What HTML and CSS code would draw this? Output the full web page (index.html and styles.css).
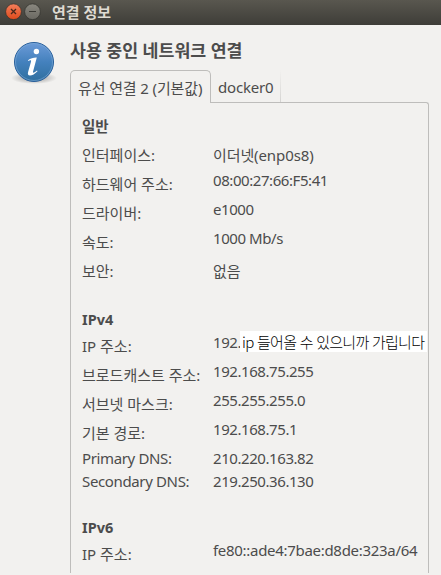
FILE: index.html
```html
<!DOCTYPE html>
<html lang="ko">
<head>
<meta charset="utf-8">
<title>연결 정보</title>
<link rel="stylesheet" href="styles.css">
</head>
<body>
<header class="titlebar">
  <svg class="controls" width="36" height="18" viewBox="0 0 36 18">
    <defs>
      <linearGradient id="close" x1="0" y1="0" x2="0" y2="1"><stop offset="0" stop-color="#f37f5c"/><stop offset="1" stop-color="#df4a1b"/></linearGradient>
      <linearGradient id="min" x1="0" y1="0" x2="0" y2="1"><stop offset="0" stop-color="#8a8880"/><stop offset="1" stop-color="#6a6861"/></linearGradient>
    </defs>
    <circle cx="8.5" cy="8.7" r="7.9" fill="url(#close)" stroke="#34332e" stroke-width=".8"/>
    <path d="M6 6l5 5M11 6l-5 5" stroke="#49281b" stroke-width="1.3"/>
    <circle cx="27.5" cy="8.7" r="7.9" fill="url(#min)" stroke="#34332e" stroke-width=".8"/>
    <path d="M24 8.5h7" stroke="#3a3934" stroke-width="1"/>
  </svg>
  <h1>연결 정보</h1>
</header>
<main>
  <svg class="info" width="46" height="46" viewBox="0 0 46 46">
    <defs>
      <linearGradient id="blue" x1="0" y1="0" x2="0" y2="1"><stop offset="0" stop-color="#6c9bd8"/><stop offset=".5" stop-color="#4481bd"/><stop offset="1" stop-color="#2f6f9f"/></linearGradient>
      <radialGradient id="shade"><stop offset="0" stop-color="#000" stop-opacity=".4"/><stop offset="1" stop-color="#000" stop-opacity="0"/></radialGradient>
    </defs>
    <ellipse cx="23" cy="37" rx="23" ry="6" fill="url(#shade)"/>
    <circle cx="23" cy="21" r="19.5" fill="url(#blue)" stroke="#285f9b"/>
    <circle cx="23" cy="21" r="18.5" fill="none" stroke="#83afd8" stroke-opacity=".55"/>
    <circle cx="25.4" cy="10.5" r="2.7" fill="#fff"/>
    <path d="M17 19.2C19.5 17.5 23 16.4 25.8 16.6L22 30.8C21.7 32.2 22.8 32 26 29.5L26.5 30.3C23.8 33 21.3 34.6 19 34.6C17 34.6 16.5 33.1 17.1 31L20 20.7C20.4 19 19.4 18.8 17.3 20.1Z" fill="#fff"/>
  </svg>
  <section class="content">
    <h2>사용 중인 네트워크 연결</h2>
    <nav class="tabs"><div class="tab active">유선 연결 2 (기본값)</div><div class="tab docker">docker0</div><div class="tabline"></div></nav>
    <div class="panel">
      <h3 class="general">일반</h3>
      <dl>
        <dt>인터페이스:</dt><dd class="ko">이더넷(enp0s8)</dd>
        <dt>하드웨어 주소:</dt><dd>08:00:27:66:F5:41</dd>
        <dt>드라이버:</dt><dd>e1000</dd>
        <dt>속도:</dt><dd>1000 Mb/s</dd>
        <dt>보안:</dt><dd class="ko">없음</dd>
      </dl>
      <h3 class="ipv4">IPv4</h3>
      <dl>
        <dt>IP 주소:</dt><dd class="masked">192.<span class="mask">ip 들어올 수 있으니까 가립니다</span></dd>
        <dt>브로드캐스트 주소:</dt><dd>192.168.75.255</dd>
        <dt>서브넷 마스크:</dt><dd>255.255.255.0</dd>
        <dt>기본 경로:</dt><dd>192.168.75.1</dd>
        <dt class="latin">Primary DNS:</dt><dd>210.220.163.82</dd>
        <dt class="latin">Secondary DNS:</dt><dd>219.250.36.130</dd>
      </dl>
      <h3 class="ipv6">IPv6</h3>
      <dl>
        <dt>IP 주소:</dt><dd class="v6">fe80::ade4:7bae:d8de:323a/64</dd>
      </dl>
    </div>
  </section>
</main>
</body>
</html>
```
FILE: styles.css
```css
* { box-sizing: border-box; }
body { margin: 0; width: 441px; height: 575px; overflow: hidden; background: #f2f1ef; color: #4c4c4c; font: 15px/17px "Noto Sans", "Noto Sans CJK KR", sans-serif; white-space: nowrap; }
h1, h2, h3, dl, dd { margin: 0; }
.titlebar { display: flex; height: 25px; padding: 3px 0 0 5px; background: linear-gradient(#59574f, #3e3d38); color: #dfdbd2; }
.controls { flex: none; }
h1 { margin-left: 11px; font-size: 15px; line-height: 18px; }
main { display: flex; height: 550px; padding-left: 11px; }
.info { flex: none; margin-top: 16px; }
.content { width: 359px; margin-left: 13px; }
h2 { height: 45px; padding: 16px 0 0; font-size: 17.3px; line-height: 20px; }
.tabs { display: flex; height: 33px; align-items: flex-end; }
.tab { height: 33px; line-height: 35px; }
.active { width: 141px; padding-left: 7px; border: 1px solid #bebdbb; border-bottom: 0; border-radius: 5px 5px 0 0; letter-spacing: -.12px; }
.docker { width: 70px; padding-left: 7px; border-bottom: 1px solid #bebdbb; background: linear-gradient(#f2f1ef, #d5d4d2) right / 1px 100% no-repeat; letter-spacing: -.2px; }
.tabline { flex: 1; height: 4px; margin-bottom: -3px; border: solid #bebdbb; border-width: 1px 1px 0 0; border-top-right-radius: 3px; }
.panel { height: 470px; padding: 13px 0 0 11px; border-left: 1px solid #bebdbb; background: linear-gradient(#bebdbb, #bebdbb) right 0 top 3px / 1px 100% no-repeat; }
h3 { font-size: 14.5px; line-height: 20px; }
.general { height: 28px; }
.ipv4 { height: 26px; margin-top: 26px; }
.ipv6 { height: 26px; margin-top: 26px; }
dl { display: grid; grid-template-columns: 131px 1fr; row-gap: 6px; }
dt, dd.ko { line-height: 23px; }
dd { height: 17px; line-height: 15px; letter-spacing: -.43px; }
dd.ko { height: 23px; letter-spacing: -.1px; }
dt.latin { line-height: 15px; letter-spacing: -.36px; }
dd.v6 { letter-spacing: -.3px; }
.masked { display: flex; }
.mask { flex: none; width: 187px; height: 21px; margin: -4px 0 0 -1px; padding-left: 2px; background: #fff; color: #000; font: 300 15px/22px "Noto Sans CJK KR", sans-serif; letter-spacing: -.73px; }
```
